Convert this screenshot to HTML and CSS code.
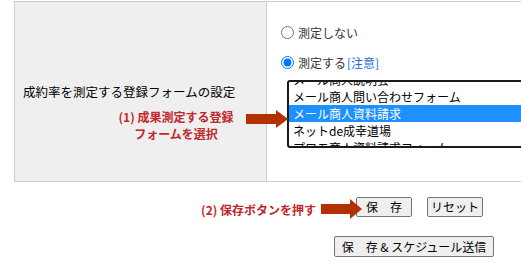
FILE: index.html
```html
<!DOCTYPE html>
<html lang="ja">
<head>
    <meta charset="UTF-8">
    <title>成約率設定</title>
    <link rel="stylesheet" href="styles.css">
</head>
<body>
    <div class="page">
        <table class="settings">
            <tr>
                <th class="label-cell">成約率を測定する登録フォームの設定</th>
                <td class="field-cell">
                    <label class="choice"><input type="radio" name="measure"> 測定しない</label>
                    <label class="choice choice-on"><input type="radio" name="measure" checked> 測定する<a class="notice" href="#">[注意]</a></label>
                    <div class="listbox">
                        <ul class="options">
                            <li>メール商人説明会</li>
                            <li>メール商人問い合わせフォーム</li>
                            <li class="selected">メール商人資料請求</li>
                            <li>ネットde成幸道場</li>
                            <li>プロモ商人資料請求フォーム</li>
                        </ul>
                    </div>
                </td>
            </tr>
        </table>

        <div class="actions">
            <div class="button-row">
                <button class="btn btn-save">保　存</button>
                <button class="btn btn-reset">リセット</button>
            </div>
            <div class="button-row button-row-2">
                <button class="btn btn-schedule">保　存 &amp; スケジュール送信</button>
            </div>
        </div>

        <!-- annotations -->
        <div class="note note-1">(1) 成果測定する登録<br>フォームを選択</div>
        <svg class="arrow arrow-1" width="42" height="20" viewBox="0 0 42 20">
            <rect x="0" y="5" width="30" height="10" fill="#b33000"/>
            <polygon points="30,1 42,10 30,19" fill="#b33000"/>
        </svg>
        <div class="note note-2">(2) 保存ボタンを押す</div>
        <svg class="arrow arrow-2" width="41" height="20" viewBox="0 0 41 20">
            <rect x="0" y="5" width="29" height="10" fill="#b33000"/>
            <polygon points="29,0 41,10 29,20" fill="#b33000"/>
        </svg>
    </div>
</body>
</html>
```

FILE: styles.css
```css
/* settings form */
body {
    margin: 0;
    font-family: "Noto Sans CJK JP", "Liberation Sans", sans-serif;
    font-size: 13px;
    color: #000;
    background-color: #fff;
    overflow: hidden;
}

.page {
    position: relative;
    width: 521px;
    height: 266px;
}

.settings {
    border-collapse: collapse;
    margin: 1px 0 0 14px;
    width: 600px;
}

.label-cell,
.field-cell {
    border: 1px solid #ccc;
    padding: 0;
}

.label-cell {
    width: 243px;
    padding-left: 8px;
    background-color: #efefef;
    font-weight: normal;
    font-size: 12.5px;
    text-align: left;
    vertical-align: middle;
    line-height: 17px;
}

.field-cell {
    vertical-align: top;
    padding: 24px 0 33px 14px;
}

.choice {
    display: flex;
    align-items: center;
    height: 13px;
    line-height: 13px;
    font-size: 12px;
    color: #333;
}

.choice input {
    margin: 0 4px 0 0;
    width: 13px;
    height: 13px;
}

.choice-on {
    margin-top: 17px;
}

.notice {
    color: #1a6ed8;
    text-decoration: none;
    margin-left: 1px;
}

.listbox {
    margin: 11px 0 0 6px;
    height: 64px;
    border: 2px solid #1a1a1a;
    border-radius: 3px;
    overflow: hidden;
}

.options {
    list-style: none;
    margin: -11px 0 0 0;
    padding: 0;
    font-size: 12px;
    line-height: 17px;
}

.options li {
    padding-left: 4px;
    white-space: nowrap;
}

.options .selected {
    background-color: #1e90ff;
    color: #fff;
}

.actions {
    margin-top: 15px;
}

.button-row {
    display: flex;
    gap: 15px;
    padding-left: 356px;
}

.button-row-2 {
    margin-top: 19px;
    padding-left: 334px;
}

.btn {
    font-family: "Noto Sans CJK JP", "Liberation Sans", sans-serif;
    font-size: 12px;
    height: 20px;
    padding: 0;
    line-height: 18px;
    text-align: center;
    background-color: #efefef;
    border: 1px solid #767676;
    border-radius: 2px;
    color: #000;
    white-space: nowrap;
}

.btn-save,
.btn-reset {
    width: 56px;
}

.btn-schedule {
    width: 160px;
    height: 21px;
}

.note {
    position: absolute;
    color: #c0282d;
    font-weight: bold;
    font-size: 12px;
    line-height: 17px;
}

.note-1 {
    left: 104px;
    top: 107px;
    width: 144px;
    text-align: center;
}

.note-2 {
    left: 190px;
    top: 200px;
    width: 126px;
    text-align: right;
}

.arrow {
    position: absolute;
}

.arrow-1 {
    left: 246px;
    top: 108px;
}

.arrow-2 {
    left: 321px;
    top: 198px;
}
```
